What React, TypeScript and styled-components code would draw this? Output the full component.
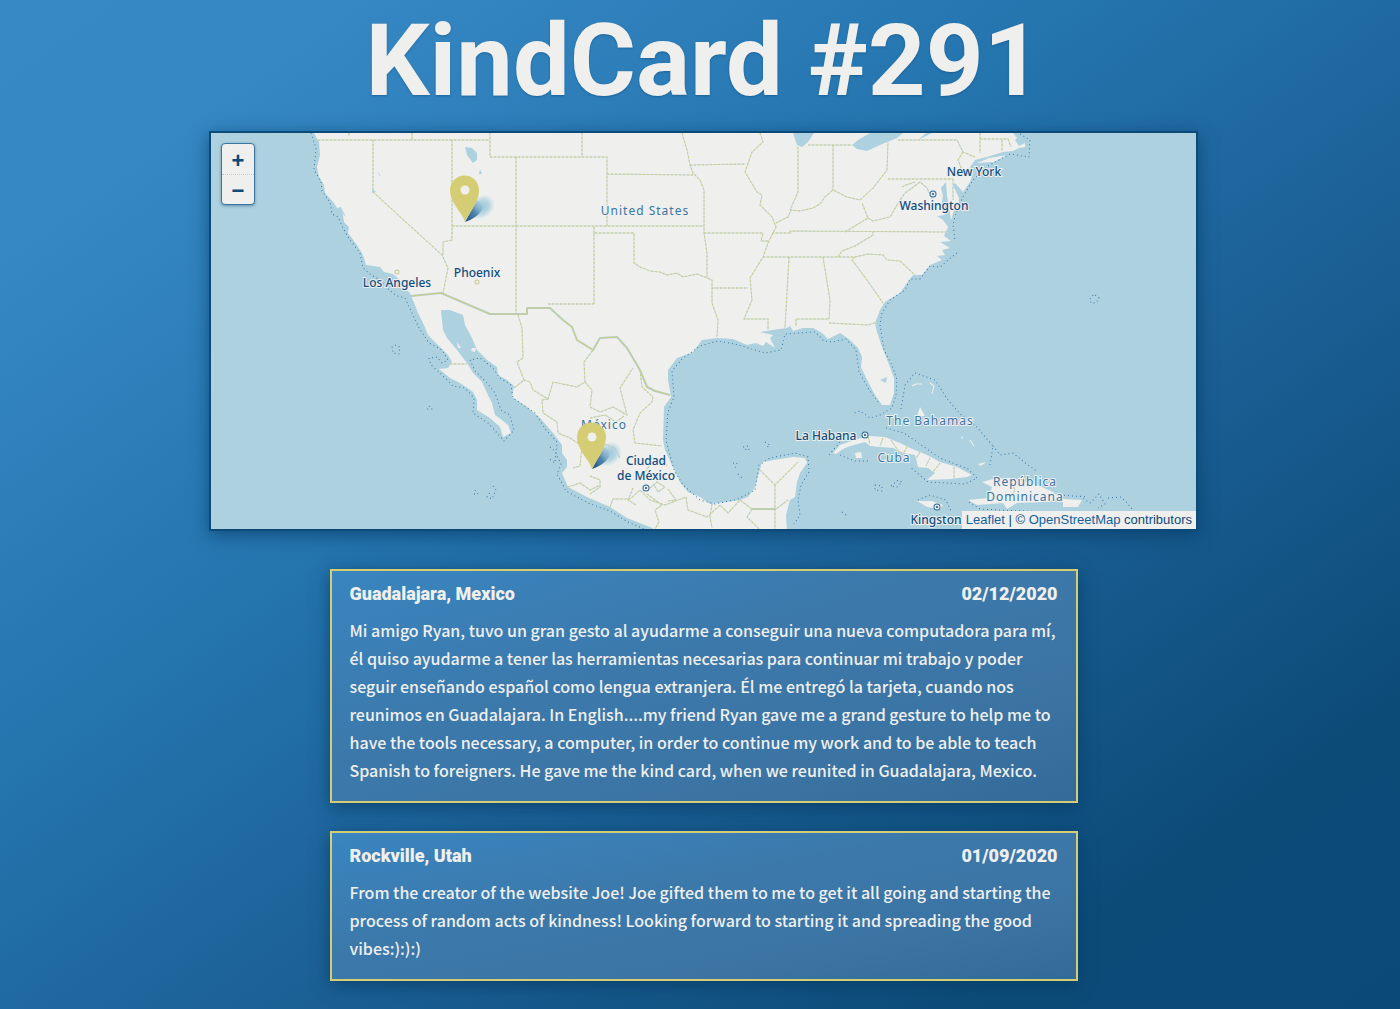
import React from 'react';
import styled, { createGlobalStyle } from 'styled-components';

const GlobalStyle = createGlobalStyle`
  * { box-sizing: border-box; }
  html { min-height: 100%; background: #0b4a79; }
  body {
    margin: 0;
    min-height: 100vh;
    color: #efefed;
    background: linear-gradient(to bottom right, #3789c5 0%, #3688c4 12%, #2474ae 39%, #1c6197 59%, #0c4b78 85%, #0b4a78 100%);
  }
`;

const Page = styled.main`
  display: flex;
  flex-direction: column;
  align-items: center;
  padding: 0 0 28px 7px;
`;

const Title = styled.h1`
  margin: 0;
  font: 700 101px/121px Roboto, "Liberation Sans", sans-serif;
  text-shadow: 0 1px 2px rgba(11, 74, 121, 0.5);
`;

const MapFrame = styled.section`
  display: grid;
  width: 71%;
  height: 400px;
  margin-top: 10px;
  border: 2px solid #0b4a79;
  background: #add1de;
  box-shadow: 0 4px 16px rgba(7, 60, 102, 0.7);
  overflow: hidden;

  > * { grid-area: 1 / 1; }
`;

const MapCanvas = styled.svg`
  display: block;
  width: 100%;
  height: 396px;
`;

const Label = styled.text<{ $country?: boolean }>`
  font: ${(p) => (p.$country ? 400 : 500)} 12px "Noto Sans", sans-serif;
  letter-spacing: ${(p) => (p.$country ? '1px' : 'normal')};
  fill: ${(p) => (p.$country ? '#3b75a4' : '#0f4d7e')};
  stroke: #efefed;
  stroke-width: 2px;
  paint-order: stroke;
  text-anchor: middle;
`;

const ZoomControl = styled.div`
  align-self: start;
  justify-self: start;
  margin: 10px;
  border: 1px solid #3b75a4;
  border-radius: 4px;
  background: #efefed;
  overflow: hidden;
  box-shadow: 0 1px 3px rgba(15, 77, 126, 0.5);
`;

const ZoomButton = styled.button`
  display: block;
  width: 32px;
  height: 30px;
  padding: 4px 0 0;
  border: 0;
  background: transparent;
  color: #0b4a79;
  font: 700 22px/26px "Liberation Sans", sans-serif;

  & + & { padding-top: 2px; border-top: 1px dotted #add1de; }
`;

const Attribution = styled.p`
  align-self: end;
  justify-self: end;
  margin: 0;
  padding: 0 4px;
  background: #efefed;
  color: #0b4a79;
  font: 13px/18px "Liberation Sans", sans-serif;

  a { color: #17609b; text-decoration: none; }
`;

const Stories = styled.section`
  display: flex;
  flex-direction: column;
  gap: 28px;
  width: 90%;
  max-width: 748px;
  margin-top: 38px;
`;

const Card = styled.article`
  padding: 11px 18px 17px;
  border: 2px solid #d4cd74;
  background: linear-gradient(to bottom right, #3985c0 0%, #3c79ab 40%, #3b74a3 75%, #326b9a 100%);
  box-shadow: 0 4px 16px rgba(7, 60, 102, 0.8);
`;

const CardHead = styled.header`
  display: flex;
  justify-content: space-between;
  margin-bottom: 10px;
  font: 900 18px/24px Roboto, "Liberation Sans", sans-serif;
`;

const Place = styled.h2`
  margin: 0;
  font: inherit;
`;

const Story = styled.p`
  margin: 0;
  font: 500 16px/28px "Noto Sans CJK SC", "Noto Sans", sans-serif;
`;

const LAND =
  'M314 133L316 137 319 142 320 155 317 167 319 177 324 185 325 193 333 202 337 208 341 207 343 215 344 222 349 227 348 233 357 245 363 255 366 265 380 267 384 272 393 274 400 280 404 288 410 293 413 300 418 313 424 325 428 335 440 347 448 355 452 362 448 368 439 369 450 378 460 383 473 392 477 400 477 410 490 418 500 427 503 437 511 433 508 425 502 420 495 415 492 403 487 393 482 382 473 373 467 363 457 350 447 338 443 330 441 310 450 310 455 312 463 315 465 325 472 338 477 350 487 360 497 367 498 375 507 380 514 386 512 397 527 407 540 418 553 433 562 445 562 453 567 460 567 467 562 473 568 487 587 497 610 507 627 518 650 527 655 530 787 530 786 515 790 500 795 497 797 482 800 473 807 463 805 458 793 457 780 459 762 462 759 473 755 487 748 497 740 500 727 502 710 504 700 497 688 492 680 482 673 467 665 450 663 440 664 407 671 397 668 380 668 370 677 358 693 352 702 340 717 338 733 339 747 345 756 343 763 346 766 342 775 348 770 338 773 335 760 332 773 330 787 328 790 326 793 331 803 328 813 328 822 333 828 339 840 333 850 340 858 348 862 357 861 367 867 380 875 395 882 405 890 405 894 393 894 378 888 362 882 347 877 332 875 323 880 310 885 302 900 293 907 283 913 275 922 275 930 265 942 260 937 256 945 255 942 250 950 248 940 242 951 241 944 236 948 227 943 220 937 216 945 215 941 207 943 196 941 188 946 182 947 196 949 207 951 220 954 210 959 207 959 198 953 185 955 183 963 192 970 182 973 173 970 167 975 160 987 157 1003 152 1013 151 1019 148 1025 147 1025 143 1019 146 1015 140 1017 138 1013 133Z';

const ISLANDS =
  'M977 163L989 158 1007 155 994 162Z M833 453L840 445 857 439 870 436 885 437 900 443 910 448 927 455 940 462 957 467 972 475 967 477 950 479 927 480 935 473 928 468 918 467 915 455 903 453 893 448 880 447 870 446 865 442 850 446 843 449 836 454Z M855 453L861 452 862 458 856 458Z M917 501L932 501 943 505 940 509 927 507Z M982 482L993 479 1010 478 1033 483 1053 492 1060 498 1047 502 1017 503 1007 509 1003 503 977 505 968 500 988 498 992 487Z M1063 499L1082 500 1078 507 1063 507Z M917 416L920 407 925 416Z M978 464L986 462 981 466Z M457 342L461 348 458 348Z M472 348L476 348 475 352 471 351Z';

const LAKES =
  'M852 145L858 140 870 133 903 133 897 138 880 145 867 151 857 149Z M793 133L814 133 808 142 802 147 797 145Z M465 147L472 148 477 153 477 160 473 163 467 155Z M480 169L482 174 479 174Z M378 171L381 177 379 175Z M372 188L376 192 372 193Z M341 207L346 217 343 214Z M880 380L887 377 886 383Z M918 140L926 133 932 133Z';

const STATES =
  'M318 140H490 M349 133V136 M412 133V140 M490 133V157H607V226 M582 133V157 M607 174L693 175 M690 165L745 164 M452 226H704 M516 157V313 M373 140V192L442 255 448 268 443 293 M452 140V240L443 242V255 M594 304H548 M594 304V233H634V263L640 267 650 271 660 272 667 275 677 273 683 277 697 274 712 280V303L718 320 717 337 M594 233V226 M682 133L687 150 690 165 693 173 700 180 704 190V233L707 253V277 M712 288H748 M704 233H763L761 241H768 M760 133L763 142 752 152 745 172 757 192 762 195 760 205 772 217 776 227 768 243 763 257 750 278 752 300 744 319H768V330 M776 223L788 217 791 210 800 211 813 208 820 204 825 197 833 190 847 197 860 200 873 188 887 170 888 142 M888 179H953 M798 147V192L790 210 M833 145V190 M808 145H852 M772 233H791L790 231 948 232 M763 257H855 M789 257L785 328 M823 257L830 300 829 319H796V326 M829 323L868 325 877 322 M855 257L868 254 883 255 887 260 900 261 915 275 M855 257L852 260 867 280 883 303 M838 257L842 251 855 246 873 235V232 M845 232L868 218 862 203 M868 218L873 221 890 217 900 200 905 193 920 182 927 188 933 200 M902 187L906 185 915 182 M898 140H957L963 152 975 157 M963 152L958 160 962 170 M980 133V153 M980 139H1008 M1002 140V151 M1008 139L1011 147 M953 179V200';

const MEXICO =
  'M518 315L522 328 523 358 517 362 524 380 514 388 M524 380L530 382 533 390 548 399 553 382 577 387 585 382 584 362 593 350 M585 382L592 390 590 407 600 412 613 407 627 415 620 388 633 368 M548 399L542 400 543 413 557 422 558 433 570 438 582 446 580 466 573 468 M640 370L642 387 653 397 652 402 640 413 633 430 635 443 662 446 M590 418L605 415 616 422 624 416 M604 444L615 448 620 458 M590 476L600 480 600 487 590 494 M568 487L580 483 590 490 600 485 M610 507L613 499 630 499 640 490 650 500 665 505 686 497 688 510 707 517 720 505 728 513 740 500 752 509H776L788 500 M633 488L628 500 636 505 M647 494L662 505 655 510 659 522 655 529 M643 475L650 465 660 460 667 466 M650 488L657 482 665 487 658 492 654 485 M668 489L676 500 668 501 M712 504L710 517 712 528 M760 470L775 485 798 462 M775 485V530 M752 509L747 517 760 530 M450 364H467 M868 437L870 444 M883 438L880 446 M891 440L899 452 M907 447L903 454 M920 452L915 460 M930 458L926 466 M940 463L933 472 M954 467V479 M1010 480L1015 490 1009 500';

const FRONTIER =
  'M411 296L441 293 490 314H527V308H550L563 320 572 327 577 340 593 350 600 338 617 337 627 348 640 370 647 387 655 391 670 395 M752 509H776';

const SEA_LINES =
  'M311 133L316 148 314 170 321 181 322 191 330 202 332 214 338 217 343 228 350 240 360 253 363 268 371 275 379 279 389 290 397 296 405 298 411 311 419 328 429 343 442 350 448 360 442 363 437 357 429 358 431 365 439 372 453 386 465 388 474 398 473 413 488 423 498 434 504 441 514 430 510 415 501 410 495 393 487 383 475 371 470 360 480 358 492 367 500 378 511 385 513 398 535 413 546 430 557 442 556 454 561 464 557 474 566 491 588 503 610 511 628 522 644 529 M1020 134L1030 140 1029 157 1010 154 988 166 973 180 963 197 956 213 953 225 955 240 M957 253L948 260 940 267 930 266 920 279 910 279 905 290 890 300 882 313 880 325 884 350 892 365 897 380 896 395 892 408 880 415 870 418 860 411 852 414 M878 402L868 388 859 372 856 350 846 339 832 342 824 341 815 332 785 334 781 350 765 353 745 347 735 344 718 341 700 346 682 359 672 371 674 397 668 412 666 440 674 470 683 485 700 500 715 504 738 499 755 490 759 465 770 458 795 453 808 457 809 472 801 485 798 500 800 515 794 524 M901 409L905 385 915 373 935 380 948 400 960 414 975 425 993 446 990 465 M886 428L904 433 940 458 968 469 977 478 965 484 928 482 910 467 M993 446L1000 455 1013 453 1024 462 1038 472 M829 455L840 442 M840 455L855 461 870 461 M395 345L400 347 399 354 393 353 392 346 M429 406L432 409 427 409 M550 447L556 452 555 463 548 458 M475 490L478 494 474 494 M493 486L496 490 492 499 487 497 490 492 M743 447L748 446 749 450 744 449 M765 442L770 445 766 448 M733 463L737 463 735 468 M738 474L742 478 M875 485L882 486 882 491 875 490Z M891 486L898 480 902 482 897 487Z M842 512L846 515 M1090 299L1094 294 1099 298 1096 303 1091 303Z M918 500L930 495 946 500 951 511 M969 502L980 509 1000 510 1070 513 M1080 496L1090 503 1099 494 1105 504 1098 508 M1108 498L1121 497 1128 504 1134 511 M1060 495L1087 497';

const LABELS: Array<[string, number, number, boolean?]> = [
  ['Los Angeles', 397, 287], ['Phoenix', 477, 277], ['United States', 645, 215, true],
  ['New York', 974, 176], ['Washington', 934, 210], ['La Habana', 826, 440],
  ['The Bahamas', 930, 425, true], ['Cuba', 894, 462, true], ['República', 1025, 486, true],
  ['Dominicana', 1025, 501, true], ['Kingston', 936, 524], ['México', 604, 429, true],
  ['Ciudad', 646, 465], ['de México', 646, 480],
];

const CITIES = [[397, 272], [477, 282]];
const CAPITALS = [[933, 194], [865, 435], [937, 507], [646, 488]];
const PINS = [[465, 222], [592, 469]];

const STORIES = [
  {
    place: 'Guadalajara, Mexico',
    date: '02/12/2020',
    text: 'Mi amigo Ryan, tuvo un gran gesto al ayudarme a conseguir una nueva computadora para mí, él quiso ayudarme a tener las herramientas necesarias para continuar mi trabajo y poder seguir enseñando español como lengua extranjera. Él me entregó la tarjeta, cuando nos reunimos en Guadalajara. In English....my friend Ryan gave me a grand gesture to help me to have the tools necessary, a computer, in order to continue my work and to be able to teach Spanish to foreigners. He gave me the kind card, when we reunited in Guadalajara, Mexico.',
  },
  {
    place: 'Rockville, Utah',
    date: '01/09/2020',
    text: 'From the creator of the website Joe! Joe gifted them to me to get it all going and starting the process of random acts of kindness! Looking forward to starting it and spreading the good vibes:):):)',
  },
];

function MapDrawing() {
  return (
    <MapCanvas viewBox="211 133 985 396" preserveAspectRatio="xMidYMid slice" role="img" aria-label="Map of card locations">
      <defs>
        <radialGradient id="pinGlow">
          <stop offset="0" stopColor="#9dc6d8" />
          <stop offset="0.5" stopColor="#add1de" stopOpacity="0.9" />
          <stop offset="1" stopColor="#add1de" stopOpacity="0" />
        </radialGradient>
        <linearGradient id="pinShade" x1="0" y1="1" x2="1" y2="0">
          <stop offset="0" stopColor="#0f4d7e" />
          <stop offset="0.5" stopColor="#3b75a4" stopOpacity="0.85" />
          <stop offset="1" stopColor="#8dbbd0" stopOpacity="0" />
        </linearGradient>
      </defs>
      <path d={LAND} fill="#efefed" />
      <path d={ISLANDS} fill="#efefed" />
      <path d="M912 386L916 384 922 384 M930 383L934 386 932 394 M961 437L963 438 M970 440L974 446" fill="none" stroke="#efefed" />
      <path d={LAKES} fill="#add1de" />
      <g fill="none" strokeLinejoin="round">
        <path d={STATES + MEXICO} stroke="#c4dade" />
        <path d={STATES + MEXICO} stroke="#d0cb80" strokeDasharray="2 2" />
        <path d={FRONTIER} stroke="#add1de" strokeWidth="2" />
        <path d={FRONTIER} stroke="#cfcb7c" />
        <path d={SEA_LINES} stroke="#3577ab" strokeDasharray="1 3" />
      </g>
      {CITIES.map(([x, y]) => (
        <circle key={x} cx={x} cy={y} r="2" fill="#efefed" stroke="#c8ca90" />
      ))}
      {CAPITALS.map(([x, y]) => (
        <g key={x}>
          <circle cx={x} cy={y} r="3" fill="#efefed" stroke="#2a669a" />
          <circle cx={x} cy={y} r="1" fill="#0f4d7e" />
        </g>
      ))}
      {LABELS.map(([name, x, y, country]) => (
        <Label key={name} x={x} y={y} $country={country}>{name}</Label>
      ))}
      {PINS.map(([x, y]) => (
        <g key={x} transform={`translate(${x} ${y})`}>
          <ellipse cx="17" cy="-15" rx="14" ry="11" transform="rotate(-40 17 -15)" fill="url(#pinGlow)" />
          <path d="M0 0L12 -22Q18 -20 17 -12Q12 -4 0 0Z" fill="url(#pinShade)" />
          <path d="M0 0C-3 -10 -15 -19 -15 -32A14.500 14.500 0 0 1 14 -32C14 -19 4 -10 0 0Z" fill="#d4cd74" />
          <circle cx="0" cy="-32" r="4.500" fill="#efefed" />
        </g>
      ))}
    </MapCanvas>
  );
}

export default function App() {
  return (
    <>
      <GlobalStyle />
      <Page>
        <Title>KindCard #291</Title>
        <MapFrame>
          <MapDrawing />
          <ZoomControl>
            <ZoomButton type="button" aria-label="Zoom in">+</ZoomButton>
            <ZoomButton type="button" aria-label="Zoom out">−</ZoomButton>
          </ZoomControl>
          <Attribution>
            <a href="#leaflet">Leaflet</a> | © <a href="#osm">OpenStreetMap</a> contributors
          </Attribution>
        </MapFrame>
        <Stories>
          {STORIES.map((s) => (
            <Card key={s.place}>
              <CardHead>
                <Place>{s.place}</Place>
                <time>{s.date}</time>
              </CardHead>
              <Story>{s.text}</Story>
            </Card>
          ))}
        </Stories>
      </Page>
    </>
  );
}
